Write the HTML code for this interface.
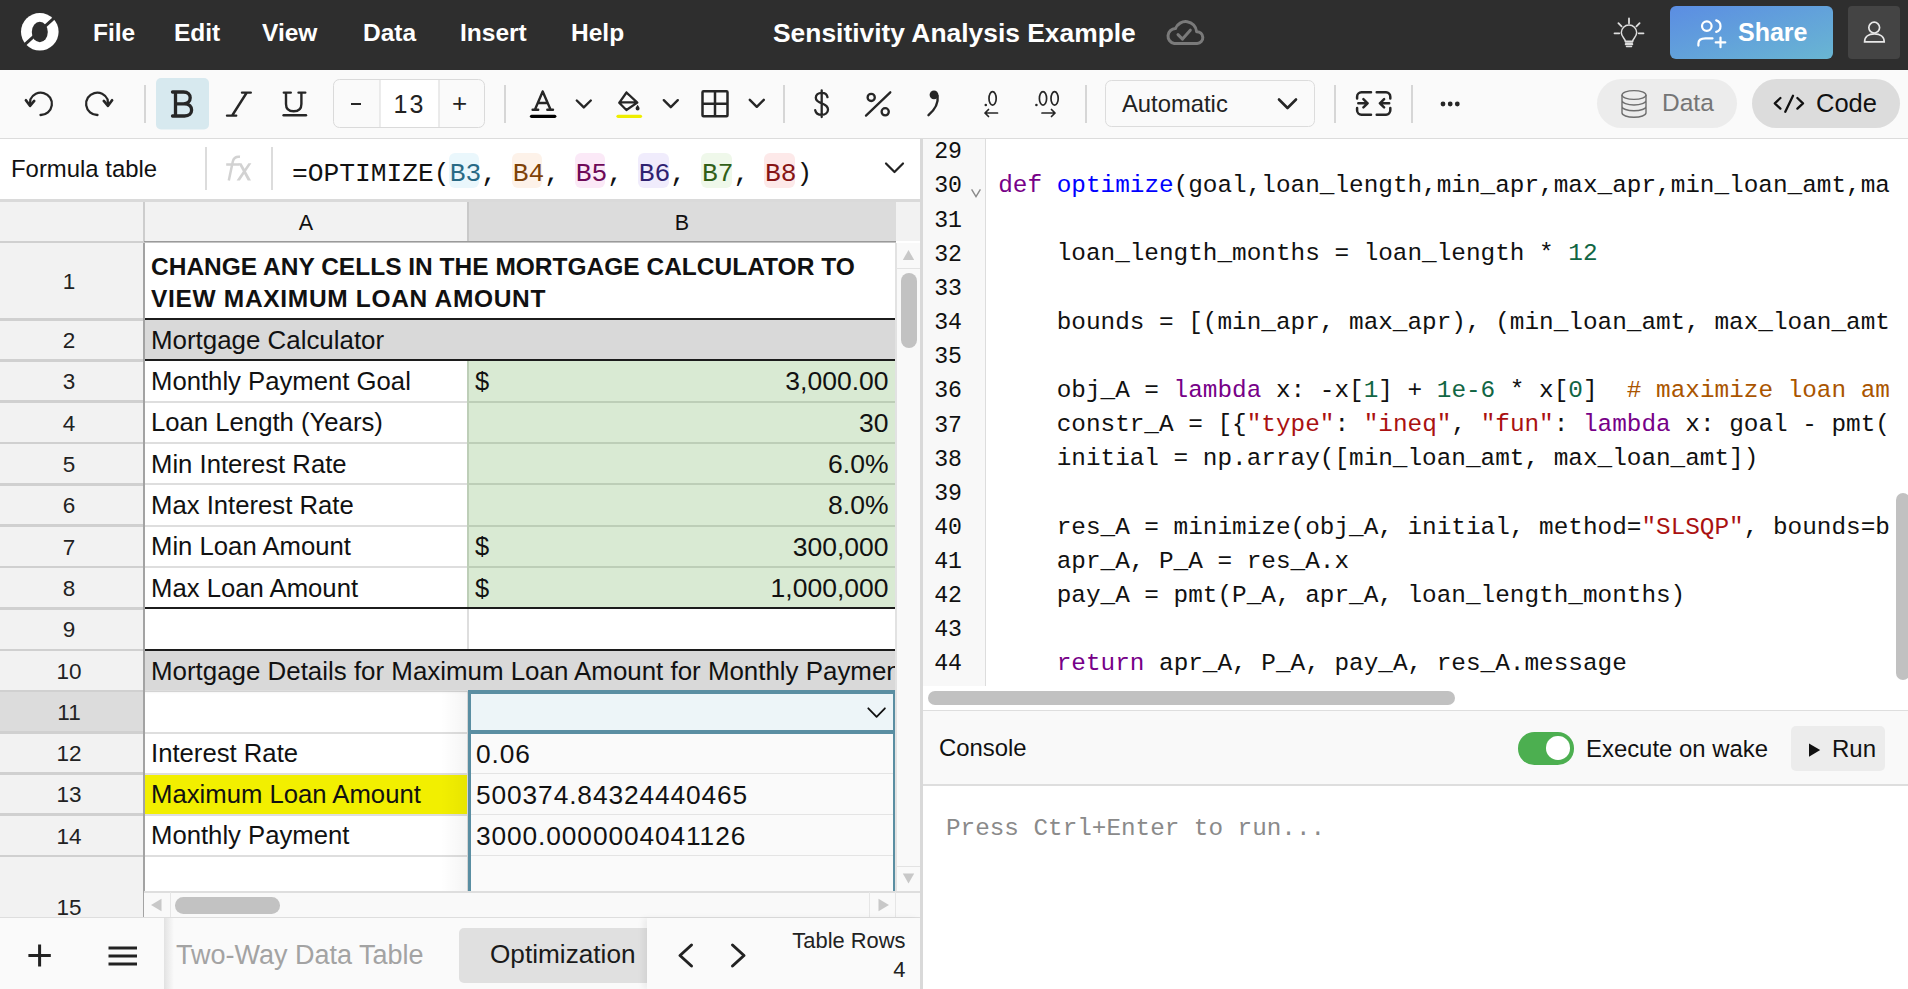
<!DOCTYPE html>
<html><head><meta charset="utf-8">
<style>
*{box-sizing:border-box;margin:0;padding:0}
html,body{width:1908px;height:989px;overflow:hidden;background:#fff;font-family:"Liberation Sans",sans-serif;color:#111}
.a{position:absolute}
.t{position:absolute;white-space:nowrap;line-height:1}
#top{left:0;top:0;width:1908px;height:70px;background:#2e2e2e}
#tb{left:0;top:70px;width:1908px;height:69px;background:#fafafa;border-bottom:1.2px solid #dcdcdc}
.sep{position:absolute;width:2px;background:#d4d4d4}
.ic{position:absolute;overflow:visible}
.menu{font-size:24.5px;font-weight:bold;color:#fff;top:21px}
</style></head><body>
<!-- TOP BAR -->
<div id="top" class="a">
  <svg class="a" style="left:0;top:0" width="1908" height="70" viewBox="0 0 1908 70">
    <defs><linearGradient id="sg" x1="0" y1="0" x2="1" y2="1"><stop offset="0" stop-color="#5b8de3"/><stop offset="1" stop-color="#69b6d2"/></linearGradient></defs>
    <circle cx="39.8" cy="31.8" r="18.8" fill="#fff"/>
    <ellipse cx="39.8" cy="32" rx="8" ry="10.2" fill="#2e2e2e"/>
    <line x1="20" y1="48.8" x2="59" y2="13.6" stroke="#2e2e2e" stroke-width="3"/>
    <g fill="none" stroke="#7a7a7a" stroke-width="3" stroke-linecap="round" stroke-linejoin="round">
      <path d="M1174.3 43.5 H1197.2 A5.9 5.9 0 0 0 1196.6 31.7 A11 11 0 0 0 1175.4 28.6 A7.5 7.5 0 0 0 1174.3 43.5 Z"/>
      <path d="M1178 34.6 L1182.5 39.1 L1190.3 30.2"/>
    </g>
    <g fill="none" stroke="#dedede" stroke-width="1.5" stroke-linecap="round">
      <path d="M1625.3 41.3 C1625.3 38.5 1621.3 37 1621.3 32.6 A7.7 7.7 0 0 1 1636.7 32.6 C1636.7 37 1632.7 38.5 1632.7 41.3 Z"/>
      <path d="M1625.5 43 H1632.5 M1625.5 44.6 H1632.5 M1626.5 46.5 H1631.5"/>
      <path d="M1629 18.5 V23.3 M1618.4 23.2 L1621.6 26.4 M1639.6 23.2 L1636.4 26.4 M1614.5 33.3 H1619.3 M1638.7 33.3 H1643.5" stroke-width="1.8"/>
    </g>
    <rect x="1670" y="6" width="163" height="53" rx="6" fill="url(#sg)"/>
    <g fill="none" stroke="#fff" stroke-width="2.2" stroke-linecap="round">
      <circle cx="1706.8" cy="26.1" r="4.8"/>
      <path d="M1716.2 20.4 A6 6 0 0 1 1716.2 31.9"/>
      <path d="M1698.4 45.6 V43.5 C1698.4 40 1701.5 38.4 1705.5 38.4 H1712.5"/>
      <path d="M1720.5 37.6 V47.2 M1715.7 42.4 H1725.3"/>
    </g>
    <rect x="1848" y="6" width="52" height="53" rx="4" fill="#444"/>
    <g fill="none" stroke="#e8e8e8" stroke-width="1.7">
      <circle cx="1874.2" cy="27.6" r="5.4"/>
      <path d="M1864.6 41.8 C1864.6 36.5 1868.8 33.8 1874.4 33.8 C1880 33.8 1884.2 36.5 1884.2 41.8 Z"/>
    </g>
  </svg>
  <div class="t menu" style="left:93px">File</div>
  <div class="t menu" style="left:174px">Edit</div>
  <div class="t menu" style="left:262px">View</div>
  <div class="t menu" style="left:363px">Data</div>
  <div class="t menu" style="left:460px">Insert</div>
  <div class="t menu" style="left:571px">Help</div>
  <div class="t menu" style="left:773px;font-size:26.4px;top:19.5px">Sensitivity Analysis Example</div>
  <div class="t menu" style="left:1738px;font-size:25px;top:20px">Share</div>
</div>
<!-- TOOLBAR -->
<div id="tb" class="a"></div>
<svg class="a" style="left:0;top:70px" width="1908" height="68" viewBox="0 70 1908 68">
 <g fill="none" stroke="#262626" stroke-width="2.3" stroke-linecap="round" stroke-linejoin="round">
  <path d="M40.5 115 A11.2 11.2 0 1 0 30.4 99.4 L30 104.5"/>
  <path d="M25.9 100.3 L30 105.8 L34.2 100.9" stroke-width="2.7"/>
  <path d="M97.5 115 A11.2 11.2 0 1 1 107.6 99.4 L108 104.5"/>
  <path d="M112.1 100.3 L108 105.8 L103.8 100.9" stroke-width="2.7"/>
 </g>
 <rect x="144" y="85" width="2" height="38" fill="#d6d6d6"/>
 <rect x="156" y="78" width="53" height="51.5" rx="5" fill="#d7e9ef"/>
 <g fill="none" stroke="#262626" stroke-width="3.3" stroke-linecap="round" stroke-linejoin="round">
  <path d="M172.5 92 H183.5 C188 92 190.2 94.6 190.2 97.8 C190.2 101.3 187.8 103.8 183.5 103.8 H175.5 M175.5 92 V116 M175.5 103.8 H184.5 C189.4 103.8 191.6 106.8 191.6 110 C191.6 113.4 189.2 116 184.5 116 H172.5"/>
 </g>
 <g fill="none" stroke="#262626" stroke-width="2.4" stroke-linecap="round" stroke-linejoin="round">
  <path d="M246.5 93 L232.5 115 M242 92.6 H250.8 M227 115.6 H236.2"/>
  <path d="M286 92.6 V104 C286 109 289 111.3 293.7 111.3 C298.4 111.3 301.4 109 301.4 104 V92.6 M283.8 92.6 H290.8 M298.5 92.6 H305.3"/>
  <path d="M283.6 115.3 H306"/>
 </g>
 <rect x="333.5" y="79.5" width="151" height="48" rx="6" fill="#fafafa" stroke="#dadada"/>
 <rect x="380" y="80" width="58.5" height="47" fill="#fff"/>
 <rect x="379.5" y="80" width="1" height="47" fill="#dadada"/>
 <rect x="438.5" y="80" width="1" height="47" fill="#dadada"/>
 <rect x="504" y="85" width="2" height="38" fill="#d6d6d6"/>
 <g fill="none" stroke="#262626" stroke-width="2.4" stroke-linecap="round" stroke-linejoin="round">
  <path d="M542.7 91.5 L535 109.5 M542.7 91.5 L550.5 109.5 M538.3 103 H547 M532.6 109.7 H538.2 M547.3 109.7 H553"/>
  <path d="M576.8 100.5 L583.8 107.4 L590.8 100.5"/>
  <path d="M663.8 100.2 L670.8 107.2 L677.8 100.2"/>
  <path d="M749.8 99.8 L756.8 106.8 L763.8 99.8"/>
 </g>
 <path d="M531.5 116.3 H554.8" stroke="#000" stroke-width="3.2" stroke-linecap="round"/>
 <g fill="none" stroke="#262626" stroke-width="2.3" stroke-linecap="round" stroke-linejoin="round">
  <path d="M626.5 92.5 L637.3 102.6 L626.4 110 L619.2 102.8 Z M619.5 102.3 H637 M626.5 92.5 L629 95"/>
 </g>
 <path d="M637.6 104.8 C636.4 106.6 635.6 107.6 635.6 108.6 A2 2 0 0 0 639.6 108.6 C639.6 107.6 638.8 106.6 637.6 104.8Z" fill="#262626"/>
 <path d="M618 116.3 H640.5" stroke="#eeee00" stroke-width="3.2" stroke-linecap="round"/>
 <g fill="none" stroke="#262626" stroke-width="2.5" stroke-linejoin="round">
  <rect x="702.5" y="91.3" width="25" height="25" rx="1"/>
  <path d="M715 91.3 V116.3 M702.5 103.8 H727.5"/>
 </g>
 <rect x="783" y="85" width="2" height="38" fill="#d6d6d6"/>
 <g fill="none" stroke="#262626" stroke-width="2.3" stroke-linecap="round" stroke-linejoin="round">
  <path d="M827.5 97.2 C827 94.2 824.6 92.8 821.7 92.8 C818.3 92.8 815.8 94.8 815.8 97.8 C815.8 101 818.8 102.3 821.7 103.3 C825 104.5 828 105.8 828 109.5 C828 112.8 825.2 114.8 821.7 114.8 C818.3 114.8 815.8 113 815.2 110.2 M821.7 90.5 V117"/>
  <path d="M866 115.6 L890.3 92.3"/>
  <circle cx="871.2" cy="97.4" r="3.6"/>
  <circle cx="885.2" cy="111.8" r="3.6"/>
 </g>
 <circle cx="934" cy="94.8" r="4.4" fill="#262626"/>
 <path d="M937.6 96 C938.6 104 934.5 110 928.5 115.2" fill="none" stroke="#262626" stroke-width="2.4" stroke-linecap="round"/>
 <g fill="none" stroke="#262626" stroke-width="1.7" stroke-linecap="round" stroke-linejoin="round">
  <ellipse cx="992.6" cy="98.4" rx="3.6" ry="6.8"/>
  <path d="M997.5 113 H985 M988.5 109.5 L985 113 L988.5 116.5"/>
  <ellipse cx="1043" cy="98.4" rx="3.6" ry="6.8"/>
  <ellipse cx="1054.6" cy="98.4" rx="3.6" ry="6.8"/>
  <path d="M1042 113 H1055 M1051.5 109.5 L1055 113 L1051.5 116.5"/>
 </g>
 <circle cx="985.8" cy="105" r="1.3" fill="#262626"/>
 <circle cx="1036.4" cy="105" r="1.3" fill="#262626"/>
 <rect x="1085" y="85" width="2" height="38" fill="#d6d6d6"/>
 <rect x="1105.5" y="80.5" width="209" height="46" rx="6" fill="#fafafa" stroke="#dcdcdc"/>
 <path d="M1279 99.5 L1287.5 108 L1296 99.5" fill="none" stroke="#262626" stroke-width="2.6" stroke-linecap="round" stroke-linejoin="round"/>
 <rect x="1334" y="85" width="2" height="38" fill="#d6d6d6"/>
 <g fill="none" stroke="#262626" stroke-width="2.5" stroke-linecap="round" stroke-linejoin="round">
  <path d="M1371 92.3 H1361.5 A4.5 4.5 0 0 0 1357.1 96.8 V98.5 M1376.7 92.3 H1386 A4.5 4.5 0 0 1 1390.3 96.8 V98.5 M1371 114.8 H1361.5 A4.5 4.5 0 0 1 1357.1 110.3 V108 M1376.7 114.8 H1386 A4.5 4.5 0 0 0 1390.3 110.3 V108"/>
  <path d="M1358.3 103.3 H1367.6 M1363.4 99.2 L1367.6 103.3 L1363.4 107.3 M1389.2 103.3 H1379.9 M1384.1 99.2 L1379.9 103.3 L1384.1 107.3"/>
 </g>
 <rect x="1411" y="85" width="2" height="38" fill="#d6d6d6"/>
 <circle cx="1443" cy="104" r="2.4" fill="#262626"/>
 <circle cx="1450.2" cy="104" r="2.4" fill="#262626"/>
 <circle cx="1457.3" cy="104" r="2.4" fill="#262626"/>
 <rect x="1597" y="79" width="140" height="49" rx="24.5" fill="#ececec"/>
 <rect x="1752" y="79" width="148" height="49" rx="24.5" fill="#dcdcdc"/>
 <g fill="none" stroke="#6e6e6e" stroke-width="1.4">
  <ellipse cx="1634" cy="95" rx="12" ry="4.4"/>
  <path d="M1622 95 V112.8 C1622 115.3 1627.4 117.3 1634 117.3 C1640.6 117.3 1646 115.3 1646 112.8 V95 M1622 100.6 C1622 103 1627.4 105 1634 105 C1640.6 105 1646 103 1646 100.6 M1622 106.4 C1622 108.8 1627.4 110.8 1634 110.8 C1640.6 110.8 1646 108.8 1646 106.4"/>
 </g>
 <g fill="none" stroke="#111" stroke-width="2.3" stroke-linecap="round" stroke-linejoin="round">
  <path d="M1780.4 98 L1774.8 103.3 L1780.4 108.6 M1797.4 98 L1803 103.3 L1797.4 108.6 M1793 95.8 L1785.3 111.8"/>
 </g>
</svg>
<div class="a" style="left:350.5px;top:102.7px;width:10.4px;height:2.2px;background:#262626"></div>
<div class="t" style="left:393.5px;top:91.5px;font-size:25px;color:#222;letter-spacing:2.2px">13</div>
<div class="t" style="left:452px;top:90px;font-size:26px;color:#222">+</div>
<div class="t" style="left:1122px;top:92px;font-size:23.8px;color:#222">Automatic</div>
<div class="t" style="left:1662px;top:91px;font-size:24.5px;color:#757575">Data</div>
<div class="t" style="left:1816px;top:91px;font-size:25.5px;color:#111">Code</div>
<!-- LEFT PANEL -->
<!--GRID-->
<div class="a" style="left:0px;top:139px;width:920px;height:60px;background:#fff;"></div>
<div class="a" style="left:0px;top:199px;width:920px;height:2.7px;background:#dadada;"></div>
<div class="t" style="left:11px;top:156.74px;font-size:23.9px;color:#111;">Formula table</div>
<div class="a" style="left:205px;top:146.5px;width:2px;height:43.5px;background:#dcdcdc;"></div>
<div class="a" style="left:270.7px;top:146.5px;width:2px;height:43.5px;background:#dcdcdc;"></div>
<svg class="a" style="left:220px;top:150px" width="40" height="40" viewBox="220 150 40 40"><g fill="none" stroke="#d2d2d2" stroke-width="2.5"><path d="M240 156.8 C236.2 156.4 233.6 157.6 232.8 161.6 L228.8 180.6 M226.2 164.5 H239.6"/></g><path d="M248.4 163.2 H251.4 L239.9 180.5 H236.6 Z M238.4 163.2 H241.5 L251 180.5 H247.7 Z" fill="#d2d2d2"/></svg>
<div class="a" style="left:448.7px;top:153px;width:30.6px;height:35px;background:#eaf7fc;border-radius:6px"></div>
<div class="a" style="left:511.78px;top:153px;width:30.6px;height:35px;background:#fdf2e9;border-radius:6px"></div>
<div class="a" style="left:574.86px;top:153px;width:30.6px;height:35px;background:#fbe9f7;border-radius:6px"></div>
<div class="a" style="left:637.94px;top:153px;width:30.6px;height:35px;background:#f0ecfc;border-radius:6px"></div>
<div class="a" style="left:701.02px;top:153px;width:30.6px;height:35px;background:#eff8ea;border-radius:6px"></div>
<div class="a" style="left:764.1px;top:153px;width:30.6px;height:35px;background:#fde9e9;border-radius:6px"></div>
<div class="t" style="left:292px;top:160.65px;font-size:26.283px;color:#111;font-family:'Liberation Mono',monospace;"><span style="color:#111">=OPTIMIZE(</span><span style="color:#296a85">B3</span><span style="color:#111">, </span><span style="color:#7f4208">B4</span><span style="color:#111">, </span><span style="color:#6e0a58">B5</span><span style="color:#111">, </span><span style="color:#2f2270">B6</span><span style="color:#111">, </span><span style="color:#315f17">B7</span><span style="color:#111">, </span><span style="color:#861414">B8</span><span style="color:#111">)</span></div>
<svg class="a" style="left:880px;top:158px" width="30" height="22"><path d="M6 5.5 L14.5 14 L23 5.5" fill="none" stroke="#222" stroke-width="2.2" stroke-linecap="round" stroke-linejoin="round"/></svg>
<div class="a" style="left:0px;top:201.7px;width:920px;height:39.5px;background:#f2f2f2;"></div>
<div class="a" style="left:468px;top:201.7px;width:428px;height:39.5px;background:#dcdcdc;"></div>
<div class="a" style="left:143px;top:201.7px;width:2px;height:41px;background:#cdcdcd;"></div>
<div class="a" style="left:467px;top:201.7px;width:2.3px;height:41px;background:#c9c9c9;"></div>
<div class="a" style="left:0px;top:241px;width:144px;height:2px;background:#d0d0d0;"></div>
<div class="a" style="left:144px;top:241px;width:752px;height:1.4px;background:#9a9a9a;"></div>
<div class="a" style="left:144px;top:242.4px;width:752px;height:1.4px;background:#c4c4c4;"></div>
<div class="t" style="left:206px;width:200px;text-align:center;top:212.78px;font-size:21.5px;color:#111;">A</div>
<div class="t" style="left:582px;width:200px;text-align:center;top:212.78px;font-size:21.5px;color:#111;">B</div>
<div class="a" style="left:0px;top:242.8px;width:143px;height:76.5px;background:#f2f2f2;"></div>
<div class="a" style="left:0px;top:319.3px;width:143px;height:41.0px;background:#f2f2f2;"></div>
<div class="a" style="left:0px;top:360.3px;width:143px;height:41.39999999999998px;background:#f2f2f2;"></div>
<div class="a" style="left:0px;top:401.7px;width:143px;height:41.400000000000034px;background:#f2f2f2;"></div>
<div class="a" style="left:0px;top:443.1px;width:143px;height:41.299999999999955px;background:#f2f2f2;"></div>
<div class="a" style="left:0px;top:484.4px;width:143px;height:41.30000000000007px;background:#f2f2f2;"></div>
<div class="a" style="left:0px;top:525.7px;width:143px;height:41.299999999999955px;background:#f2f2f2;"></div>
<div class="a" style="left:0px;top:567.0px;width:143px;height:41.299999999999955px;background:#f2f2f2;"></div>
<div class="a" style="left:0px;top:608.3px;width:143px;height:41.5px;background:#f2f2f2;"></div>
<div class="a" style="left:0px;top:649.8px;width:143px;height:41.40000000000009px;background:#f2f2f2;"></div>
<div class="a" style="left:0px;top:691.2px;width:143px;height:41.299999999999955px;background:#dcdcdc;"></div>
<div class="a" style="left:0px;top:732.5px;width:143px;height:41.0px;background:#f2f2f2;"></div>
<div class="a" style="left:0px;top:773.5px;width:143px;height:41.10000000000002px;background:#f2f2f2;"></div>
<div class="a" style="left:0px;top:814.6px;width:143px;height:41.19999999999993px;background:#f2f2f2;"></div>
<div class="a" style="left:0px;top:855.8px;width:143px;height:61.200000000000045px;background:#f2f2f2;"></div>
<div class="a" style="left:0px;top:318.05px;width:143px;height:2.5px;background:#d0d0d0;"></div>
<div class="a" style="left:0px;top:359.05px;width:143px;height:2.5px;background:#d0d0d0;"></div>
<div class="a" style="left:0px;top:400.45px;width:143px;height:2.5px;background:#d0d0d0;"></div>
<div class="a" style="left:0px;top:441.85px;width:143px;height:2.5px;background:#d0d0d0;"></div>
<div class="a" style="left:0px;top:483.15px;width:143px;height:2.5px;background:#d0d0d0;"></div>
<div class="a" style="left:0px;top:524.45px;width:143px;height:2.5px;background:#d0d0d0;"></div>
<div class="a" style="left:0px;top:565.75px;width:143px;height:2.5px;background:#d0d0d0;"></div>
<div class="a" style="left:0px;top:607.05px;width:143px;height:2.5px;background:#d0d0d0;"></div>
<div class="a" style="left:0px;top:648.55px;width:143px;height:2.5px;background:#d0d0d0;"></div>
<div class="a" style="left:0px;top:689.95px;width:143px;height:2.5px;background:#d0d0d0;"></div>
<div class="a" style="left:0px;top:731.25px;width:143px;height:2.5px;background:#d0d0d0;"></div>
<div class="a" style="left:0px;top:772.25px;width:143px;height:2.5px;background:#d0d0d0;"></div>
<div class="a" style="left:0px;top:813.35px;width:143px;height:2.5px;background:#d0d0d0;"></div>
<div class="a" style="left:0px;top:854.55px;width:143px;height:2.5px;background:#d0d0d0;"></div>
<div class="a" style="left:143px;top:242.8px;width:2px;height:675px;background:#a3a3a3;"></div>
<div class="t" style="left:-31px;width:200px;text-align:center;top:271.48px;font-size:22.5px;color:#222;">1</div>
<div class="t" style="left:-31px;width:200px;text-align:center;top:330.23px;font-size:22.5px;color:#222;">2</div>
<div class="t" style="left:-31px;width:200px;text-align:center;top:371.43px;font-size:22.5px;color:#222;">3</div>
<div class="t" style="left:-31px;width:200px;text-align:center;top:412.83px;font-size:22.5px;color:#222;">4</div>
<div class="t" style="left:-31px;width:200px;text-align:center;top:454.18px;font-size:22.5px;color:#222;">5</div>
<div class="t" style="left:-31px;width:200px;text-align:center;top:495.48px;font-size:22.5px;color:#222;">6</div>
<div class="t" style="left:-31px;width:200px;text-align:center;top:536.78px;font-size:22.5px;color:#222;">7</div>
<div class="t" style="left:-31px;width:200px;text-align:center;top:578.08px;font-size:22.5px;color:#222;">8</div>
<div class="t" style="left:-31px;width:200px;text-align:center;top:619.48px;font-size:22.5px;color:#222;">9</div>
<div class="t" style="left:-31px;width:200px;text-align:center;top:660.93px;font-size:22.5px;color:#222;">10</div>
<div class="t" style="left:-31px;width:200px;text-align:center;top:702.28px;font-size:22.5px;color:#222;">11</div>
<div class="t" style="left:-31px;width:200px;text-align:center;top:743.43px;font-size:22.5px;color:#222;">12</div>
<div class="t" style="left:-31px;width:200px;text-align:center;top:784.48px;font-size:22.5px;color:#222;">13</div>
<div class="t" style="left:-31px;width:200px;text-align:center;top:825.63px;font-size:22.5px;color:#222;">14</div>
<div class="t" style="left:-31px;width:200px;text-align:center;top:896.93px;font-size:22.5px;color:#222;">15</div>
<div class="a" style="left:145px;top:242.8px;width:751px;height:655px;background:#fff;"></div>
<div class="a" style="left:145px;top:319.3px;width:751px;height:41px;background:#d9d9d9;"></div>
<div class="a" style="left:145px;top:649.8px;width:751px;height:41.4px;background:#d9d9d9;"></div>
<div class="a" style="left:469px;top:360.3px;width:427px;height:248px;background:#d9ead3;"></div>
<div class="a" style="left:145px;top:773.5px;width:322px;height:41.1px;background:#f2ef00;"></div>
<div class="a" style="left:145px;top:400.7px;width:323px;height:2px;background:#dedede;"></div>
<div class="a" style="left:469px;top:400.7px;width:427px;height:2px;background:#bdceb7;"></div>
<div class="a" style="left:145px;top:442.1px;width:323px;height:2px;background:#dedede;"></div>
<div class="a" style="left:469px;top:442.1px;width:427px;height:2px;background:#bdceb7;"></div>
<div class="a" style="left:145px;top:483.4px;width:323px;height:2px;background:#dedede;"></div>
<div class="a" style="left:469px;top:483.4px;width:427px;height:2px;background:#bdceb7;"></div>
<div class="a" style="left:145px;top:524.7px;width:323px;height:2px;background:#dedede;"></div>
<div class="a" style="left:469px;top:524.7px;width:427px;height:2px;background:#bdceb7;"></div>
<div class="a" style="left:145px;top:566.0px;width:323px;height:2px;background:#dedede;"></div>
<div class="a" style="left:469px;top:566.0px;width:427px;height:2px;background:#bdceb7;"></div>
<div class="a" style="left:145px;top:690.2px;width:323px;height:2px;background:#dedede;"></div>
<div class="a" style="left:145px;top:731.5px;width:323px;height:2px;background:#dedede;"></div>
<div class="a" style="left:145px;top:772.5px;width:323px;height:2px;background:#dedede;"></div>
<div class="a" style="left:145px;top:813.6px;width:323px;height:2px;background:#dedede;"></div>
<div class="a" style="left:145px;top:854.8px;width:323px;height:2px;background:#dedede;"></div>
<div class="a" style="left:467.2px;top:360.3px;width:2px;height:248px;background:#bdceb7;"></div>
<div class="a" style="left:467.2px;top:608.3px;width:2px;height:41.5px;background:#dedede;"></div>
<div class="a" style="left:467.2px;top:691.2px;width:2px;height:207px;background:#dedede;"></div>
<div class="a" style="left:145px;top:318.3px;width:751px;height:2.2px;background:#1c1c1c;"></div>
<div class="a" style="left:145px;top:359.2px;width:751px;height:2.2px;background:#1c1c1c;"></div>
<div class="a" style="left:145px;top:607.2px;width:751px;height:2.2px;background:#1c1c1c;"></div>
<div class="a" style="left:145px;top:648.7px;width:751px;height:2.2px;background:#1c1c1c;"></div>
<div class="a" style="left:469px;top:691px;width:426px;height:208px;background:#fafafa;"></div>
<div class="a" style="left:469px;top:694px;width:426px;height:36px;background:#edf5f8;"></div>
<div class="a" style="left:471px;top:772.5px;width:422px;height:1.6px;background:#e4e4e4;"></div>
<div class="a" style="left:471px;top:813.6px;width:422px;height:1.6px;background:#e4e4e4;"></div>
<div class="a" style="left:471px;top:854.9px;width:422px;height:1.6px;background:#e4e4e4;"></div>
<div class="a" style="left:441px;top:691.2px;width:26.5px;height:207px;background:linear-gradient(to right,rgba(0,0,0,0),rgba(0,0,0,0.045));"></div>
<div class="a" style="left:145px;top:691.2px;width:323px;height:3px;background:linear-gradient(to bottom,rgba(0,0,0,0.06),rgba(0,0,0,0));"></div>
<div class="a" style="left:467.7px;top:690.6px;width:3.6px;height:210px;background:#5a8ea2;"></div>
<div class="a" style="left:892.9px;top:690px;width:2.2px;height:210px;background:#5a8ea2;"></div>
<div class="a" style="left:467.7px;top:690px;width:427.4px;height:4.2px;background:#5a8ea2;"></div>
<div class="a" style="left:467.7px;top:729.9px;width:427.4px;height:3.9px;background:#5a8ea2;"></div>
<svg class="a" style="left:864px;top:703px" width="26" height="18"><path d="M4.3 5.3 L12.6 13.8 L20.9 5.3" fill="none" stroke="#111" stroke-width="1.8" stroke-linecap="round" stroke-linejoin="round"/></svg>
<div class="t" style="left:151px;top:254.64px;font-size:24.5px;color:#111;font-weight:bold;">CHANGE ANY CELLS IN THE MORTGAGE CALCULATOR TO</div>
<div class="t" style="left:151px;top:286.84px;font-size:24.5px;color:#111;font-weight:bold;letter-spacing:0.68px">VIEW MAXIMUM LOAN AMOUNT</div>
<div class="t" style="left:151px;top:328.25px;font-size:25.9px;color:#111;">Mortgage Calculator</div>
<div class="t" style="left:151px;top:368.92px;font-size:25.7px;color:#111;">Monthly Payment Goal</div>
<div class="t" style="left:475px;top:369.09px;font-size:25.5px;color:#111;">$</div>
<div class="t" style="right:1019.5px;top:368.24px;font-size:26.5px;color:#111;text-align:right;">3,000.00</div>
<div class="t" style="left:151px;top:410.32px;font-size:25.7px;color:#111;">Loan Length (Years)</div>
<div class="t" style="right:1019.5px;top:409.64px;font-size:26.5px;color:#111;text-align:right;">30</div>
<div class="t" style="left:151px;top:451.72px;font-size:25.7px;color:#111;">Min Interest Rate</div>
<div class="t" style="right:1019.5px;top:451.04px;font-size:26.5px;color:#111;text-align:right;">6.0%</div>
<div class="t" style="left:151px;top:493.02px;font-size:25.7px;color:#111;">Max Interest Rate</div>
<div class="t" style="right:1019.5px;top:492.34px;font-size:26.5px;color:#111;text-align:right;">8.0%</div>
<div class="t" style="left:151px;top:534.32px;font-size:25.7px;color:#111;">Min Loan Amount</div>
<div class="t" style="left:475px;top:534.49px;font-size:25.5px;color:#111;">$</div>
<div class="t" style="right:1019.5px;top:533.64px;font-size:26.5px;color:#111;text-align:right;">300,000</div>
<div class="t" style="left:151px;top:575.62px;font-size:25.7px;color:#111;">Max Loan Amount</div>
<div class="t" style="left:475px;top:575.79px;font-size:25.5px;color:#111;">$</div>
<div class="t" style="right:1019.5px;top:574.94px;font-size:26.5px;color:#111;text-align:right;">1,000,000</div>
<div class="t" style="left:151px;top:658.55px;font-size:25.9px;color:#111;width:744px;overflow:hidden;padding-bottom:8px">Mortgage Details for Maximum Loan Amount for Monthly Payment</div>
<div class="t" style="left:151px;top:740.92px;font-size:25.7px;color:#111;">Interest Rate</div>
<div class="t" style="left:476px;top:741.21px;font-size:26.3px;color:#111;letter-spacing:0.9px">0.06</div>
<div class="t" style="left:151px;top:781.92px;font-size:25.7px;color:#111;">Maximum Loan Amount</div>
<div class="t" style="left:476px;top:782.21px;font-size:26.3px;color:#111;letter-spacing:0.9px">500374.84324440465</div>
<div class="t" style="left:151px;top:823.02px;font-size:25.7px;color:#111;">Monthly Payment</div>
<div class="t" style="left:476px;top:823.31px;font-size:26.3px;color:#111;letter-spacing:0.9px">3000.0000004041126</div>
<div class="a" style="left:896px;top:242.8px;width:24px;height:649px;background:#f9f9f9;"></div>
<div class="a" style="left:895px;top:242.8px;width:1.8px;height:649px;background:#e2e2e2;"></div>
<div class="a" style="left:896px;top:268px;width:24px;height:1.2px;background:#e3e3e3;"></div>
<div class="a" style="left:896px;top:865.5px;width:24px;height:1.2px;background:#e3e3e3;"></div>
<svg class="a" style="left:896px;top:243px" width="24" height="25"><path d="M6.8 17 L12.5 7 L18.2 17 Z" fill="#c8c8c8"/></svg>
<svg class="a" style="left:896px;top:866px" width="24" height="25"><path d="M6.8 7.5 L12.5 17.5 L18.2 7.5 Z" fill="#c8c8c8"/></svg>
<div class="a" style="left:900.8px;top:272.7px;width:16.6px;height:75.5px;background:#c2c2c2;border-radius:8.3px"></div>
<div class="a" style="left:144px;top:891px;width:776px;height:26px;background:#f9f9f9;"></div>
<div class="a" style="left:144px;top:891px;width:776px;height:1.5px;background:#dedede;"></div>
<div class="a" style="left:169.5px;top:892px;width:1.2px;height:25px;background:#e6e6e6;"></div>
<div class="a" style="left:869px;top:892px;width:1.2px;height:25px;background:#e6e6e6;"></div>
<div class="a" style="left:895px;top:892px;width:1.2px;height:25px;background:#e6e6e6;"></div>
<div class="a" style="left:0px;top:916.5px;width:920px;height:1.5px;background:#dedede;"></div>
<svg class="a" style="left:144px;top:892px" width="26" height="25"><path d="M7 13 L17.5 6.8 L17.5 19.2 Z" fill="#c8c8c8"/></svg>
<svg class="a" style="left:869px;top:892px" width="26" height="25"><path d="M20 13 L9.5 6.8 L9.5 19.2 Z" fill="#c8c8c8"/></svg>
<div class="a" style="left:175.3px;top:897px;width:104.7px;height:16.6px;background:#c2c2c2;border-radius:8.3px"></div>
<div class="a" style="left:0px;top:918px;width:920px;height:71px;background:#fafafa;"></div>
<svg class="a" style="left:0;top:918px" width="920" height="71" viewBox="0 918 920 71"><g stroke="#222" stroke-width="3" fill="none"><path d="M39.6 944.6 V966.6 M28.4 955.6 H50.8"/><path d="M108.5 948 H137 M108.5 956 H137 M108.5 964 H137"/></g></svg>
<div class="a" style="left:164px;top:918px;width:10px;height:71px;background:linear-gradient(to right,#e2e2e2,#fafafa);"></div>
<div class="t" style="left:176px;top:942.12px;font-size:27px;color:#a3a3a3;">Two-Way Data Table</div>
<div class="a" style="left:459px;top:927.5px;width:188px;height:55.5px;background:#e0e0e0;border-radius:5px 0 0 5px"></div>
<div class="t" style="left:490px;top:941.40px;font-size:26.2px;color:#1a1a1a;">Optimization</div>
<div class="a" style="left:647px;top:918px;width:273px;height:71px;background:#fafafa;box-shadow:-4px 0 6px rgba(0,0,0,0.06)"></div>
<svg class="a" style="left:647px;top:918px" width="273" height="71" viewBox="647 918 273 71"><path d="M691.5 945 L680 955.5 L691.5 966" fill="none" stroke="#222" stroke-width="3" stroke-linecap="round" stroke-linejoin="round"/><path d="M732.5 945 L744 955.5 L732.5 966" fill="none" stroke="#222" stroke-width="3" stroke-linecap="round" stroke-linejoin="round"/></svg>
<div class="t" style="right:1002.5px;top:930.24px;font-size:21.9px;color:#222;text-align:right;">Table Rows</div>
<div class="t" style="right:1002.5px;top:958.94px;font-size:21.9px;color:#222;text-align:right;">4</div>
<!--/GRID-->
<!-- DIVIDER -->
<div class="a" style="left:920.4px;top:139px;width:2.6px;height:850px;background:#d9d9d9"></div>
<!-- RIGHT PANEL -->
<!--CODE-->
<div class="a" style="left:923px;top:139px;width:985px;height:850px;background:#fff;"></div>
<div class="a" style="left:923px;top:139px;width:62px;height:546.6px;background:#f8f8f8;"></div>
<div class="a" style="left:985px;top:139px;width:1px;height:546.6px;background:#dddddd;"></div>
<div class="t" style="right:946px;top:141.26px;font-size:23.2px;color:#111;text-align:right;font-family:'Liberation Mono',monospace;">29</div>
<div class="t" style="right:946px;top:175.42px;font-size:23.2px;color:#111;text-align:right;font-family:'Liberation Mono',monospace;">30</div>
<div class="t" style="right:946px;top:209.58px;font-size:23.2px;color:#111;text-align:right;font-family:'Liberation Mono',monospace;">31</div>
<div class="t" style="right:946px;top:243.74px;font-size:23.2px;color:#111;text-align:right;font-family:'Liberation Mono',monospace;">32</div>
<div class="t" style="right:946px;top:277.90px;font-size:23.2px;color:#111;text-align:right;font-family:'Liberation Mono',monospace;">33</div>
<div class="t" style="right:946px;top:312.06px;font-size:23.2px;color:#111;text-align:right;font-family:'Liberation Mono',monospace;">34</div>
<div class="t" style="right:946px;top:346.22px;font-size:23.2px;color:#111;text-align:right;font-family:'Liberation Mono',monospace;">35</div>
<div class="t" style="right:946px;top:380.38px;font-size:23.2px;color:#111;text-align:right;font-family:'Liberation Mono',monospace;">36</div>
<div class="t" style="right:946px;top:414.54px;font-size:23.2px;color:#111;text-align:right;font-family:'Liberation Mono',monospace;">37</div>
<div class="t" style="right:946px;top:448.70px;font-size:23.2px;color:#111;text-align:right;font-family:'Liberation Mono',monospace;">38</div>
<div class="t" style="right:946px;top:482.86px;font-size:23.2px;color:#111;text-align:right;font-family:'Liberation Mono',monospace;">39</div>
<div class="t" style="right:946px;top:517.02px;font-size:23.2px;color:#111;text-align:right;font-family:'Liberation Mono',monospace;">40</div>
<div class="t" style="right:946px;top:551.00px;font-size:23.2px;color:#111;text-align:right;font-family:'Liberation Mono',monospace;">41</div>
<div class="t" style="right:946px;top:584.98px;font-size:23.2px;color:#111;text-align:right;font-family:'Liberation Mono',monospace;">42</div>
<div class="t" style="right:946px;top:618.96px;font-size:23.2px;color:#111;text-align:right;font-family:'Liberation Mono',monospace;">43</div>
<div class="t" style="right:946px;top:652.94px;font-size:23.2px;color:#111;text-align:right;font-family:'Liberation Mono',monospace;">44</div>
<div class="a" style="left:986px;top:139px;width:904px;height:546px;overflow:hidden"><div class="t" style="left:12.200000000000045px;top:0.96px;font-size:24.367px;font-family:'Liberation Mono',monospace;white-space:pre;color:#111"></div><div class="t" style="left:12.200000000000045px;top:35.12px;font-size:24.367px;font-family:'Liberation Mono',monospace;white-space:pre;color:#111"><span style="color:#770088">def</span> <span style="color:#0000ff">optimize</span>(goal,loan_length,min_apr,max_apr,min_loan_amt,max_loan_amt):</div><div class="t" style="left:12.200000000000045px;top:69.28px;font-size:24.367px;font-family:'Liberation Mono',monospace;white-space:pre;color:#111"></div><div class="t" style="left:12.200000000000045px;top:103.44px;font-size:24.367px;font-family:'Liberation Mono',monospace;white-space:pre;color:#111">    loan_length_months = loan_length * <span style="color:#116644">12</span></div><div class="t" style="left:12.200000000000045px;top:137.60px;font-size:24.367px;font-family:'Liberation Mono',monospace;white-space:pre;color:#111"></div><div class="t" style="left:12.200000000000045px;top:171.76px;font-size:24.367px;font-family:'Liberation Mono',monospace;white-space:pre;color:#111">    bounds = [(min_apr, max_apr), (min_loan_amt, max_loan_amt)]</div><div class="t" style="left:12.200000000000045px;top:205.92px;font-size:24.367px;font-family:'Liberation Mono',monospace;white-space:pre;color:#111"></div><div class="t" style="left:12.200000000000045px;top:240.08px;font-size:24.367px;font-family:'Liberation Mono',monospace;white-space:pre;color:#111">    obj_A = <span style="color:#770088">lambda</span> x: -x[<span style="color:#116644">1</span>] + <span style="color:#116644">1e-6</span> * x[<span style="color:#116644">0</span>]  <span style="color:#aa5500"># maximize loan amount</span></div><div class="t" style="left:12.200000000000045px;top:274.24px;font-size:24.367px;font-family:'Liberation Mono',monospace;white-space:pre;color:#111">    constr_A = [{<span style="color:#aa1111">"type"</span>: <span style="color:#aa1111">"ineq"</span>, <span style="color:#aa1111">"fun"</span>: <span style="color:#770088">lambda</span> x: goal - pmt(x[1], x[0], loan_length_months)}]</div><div class="t" style="left:12.200000000000045px;top:308.40px;font-size:24.367px;font-family:'Liberation Mono',monospace;white-space:pre;color:#111">    initial = np.array([min_loan_amt, max_loan_amt])</div><div class="t" style="left:12.200000000000045px;top:342.56px;font-size:24.367px;font-family:'Liberation Mono',monospace;white-space:pre;color:#111"></div><div class="t" style="left:12.200000000000045px;top:376.72px;font-size:24.367px;font-family:'Liberation Mono',monospace;white-space:pre;color:#111">    res_A = minimize(obj_A, initial, method=<span style="color:#aa1111">"SLSQP"</span>, bounds=bounds, constraints=constr_A)</div><div class="t" style="left:12.200000000000045px;top:410.70px;font-size:24.367px;font-family:'Liberation Mono',monospace;white-space:pre;color:#111">    apr_A, P_A = res_A.x</div><div class="t" style="left:12.200000000000045px;top:444.68px;font-size:24.367px;font-family:'Liberation Mono',monospace;white-space:pre;color:#111">    pay_A = pmt(P_A, apr_A, loan_length_months)</div><div class="t" style="left:12.200000000000045px;top:478.66px;font-size:24.367px;font-family:'Liberation Mono',monospace;white-space:pre;color:#111"></div><div class="t" style="left:12.200000000000045px;top:512.64px;font-size:24.367px;font-family:'Liberation Mono',monospace;white-space:pre;color:#111">    <span style="color:#770088">return</span> apr_A, P_A, pay_A, res_A.message</div></div>
<svg class="a" style="left:968px;top:186px" width="16" height="14"><path d="M3.6 3.4 L8 10.6 L12.4 3.4" fill="none" stroke="#8a8a8a" stroke-width="1.4"/></svg>
<div class="a" style="left:928px;top:691px;width:527px;height:14px;background:#c1c1c1;border-radius:7px"></div>
<div class="a" style="left:1896px;top:492.7px;width:14px;height:187.5px;background:#c1c1c1;border-radius:7px"></div>
<div class="a" style="left:923px;top:710px;width:985px;height:75.5px;background:#f9f9f9;"></div>
<div class="a" style="left:923px;top:710px;width:985px;height:1.3px;background:#dedede;"></div>
<div class="a" style="left:923px;top:784.3px;width:985px;height:1.3px;background:#dedede;"></div>
<div class="t" style="left:939px;top:736.14px;font-size:23.9px;color:#111;">Console</div>
<div class="a" style="left:1518.2px;top:732.1px;width:55.6px;height:32.5px;background:#4caf50;border-radius:16.25px"></div>
<div class="a" style="left:1546px;top:736.3px;width:23.6px;height:23.6px;border-radius:50%;background:#fff"></div>
<div class="t" style="left:1586px;top:736.74px;font-size:23.9px;color:#111;">Execute on wake</div>
<div class="a" style="left:1791.3px;top:726.1px;width:93.7px;height:44.5px;background:#ececec;border-radius:5px"></div>
<svg class="a" style="left:1805px;top:740px" width="20" height="20"><path d="M4 3.4 L15.2 10 L4 16.7 Z" fill="#111"/></svg>
<div class="t" style="left:1832px;top:736.66px;font-size:24px;color:#111;">Run</div>
<div class="t" style="left:946px;top:817.07px;font-size:24.3px;color:#8a8a8a;font-family:'Liberation Mono',monospace;">Press Ctrl+Enter to run...</div>
<!--/CODE-->
</body></html>
